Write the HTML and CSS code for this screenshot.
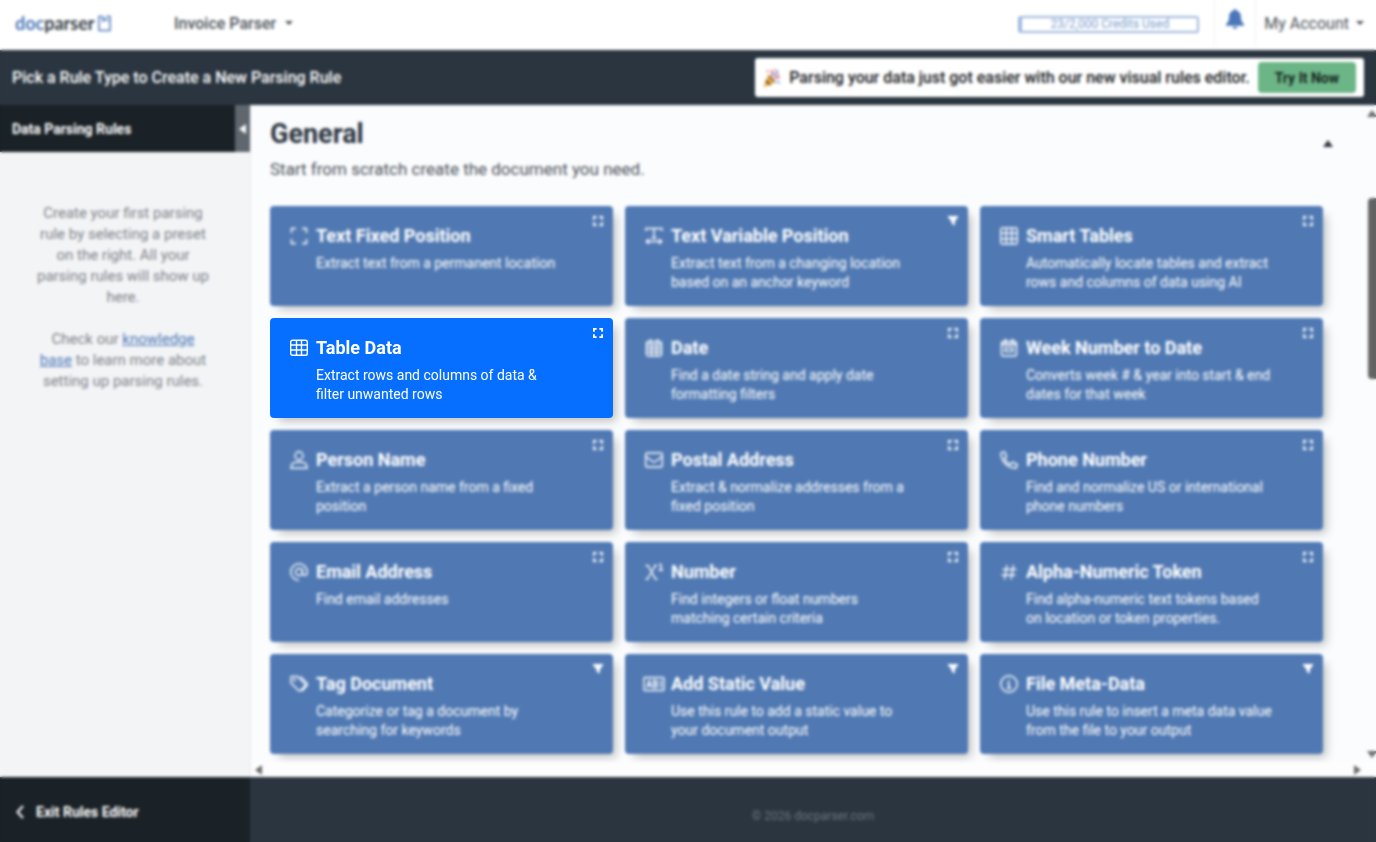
FILE: index.html
```html
<!DOCTYPE html>
<html lang="en">
<head>
    <meta charset="UTF-8">
    <meta name="viewport" content="width=device-width, initial-scale=1.0">
    <title>Docparser - Rules Editor</title>
    <link rel="stylesheet" href="styles.css">
</head>
<body>
    <!-- Icon sprite -->
    <svg class="sprite" xmlns="http://www.w3.org/2000/svg">
        <symbol id="i-frame" viewBox="0 0 18 18">
            <path d="M1.500 6V1.500H6M12 1.500h4.500V6M16.500 12v4.500H12M6 16.500H1.500V12"/>
        </symbol>
        <symbol id="i-corners" viewBox="0 0 11 11">
            <path stroke-width="2" d="M1 4V1h3M7 1h3v3M10 7v3H7M4 10H1V7"/>
        </symbol>
        <symbol id="i-funnel" viewBox="0 0 11 11">
            <path fill="currentColor" stroke="none" d="M0 0h11v1.500L7.500 6v4.500L4 8.500V6L0 1.500z"/>
        </symbol>
        <symbol id="i-anchor-text" viewBox="0 0 18 18">
            <path d="M1 4V1.500h16V4M9 1.500V11M6.500 11h5M1 14.500h16M4 12l-2.700 2.500L4 17M14 12l2.700 2.500L14 17"/>
        </symbol>
        <symbol id="i-smart-table" viewBox="0 0 18 18">
            <rect x=".8" y="1" width="16.400" height="16" rx="1.500"/>
            <path d="M1 6.300h16M1 11.700h16M6.300 1v16M11.700 1v16"/>
        </symbol>
        <symbol id="i-table" viewBox="0 0 18 18">
            <rect x=".7" y="1.200" width="16.600" height="15" rx="1.800"/>
            <path d="M1 6h16M1 11h16M6.500 1.500v14.500M11.500 1.500v14.500"/>
        </symbol>
        <symbol id="i-calendar" viewBox="0 0 18 18">
            <rect x="1.500" y="2.500" width="15" height="14.500" rx="2"/>
            <path d="M5.500 0v4M12.500 0v4M1.500 5.500h15M1.500 9.300h15M1.500 13h15M6.500 5v12M11.500 5v12"/>
        </symbol>
        <symbol id="i-week" viewBox="0 0 18 18">
            <rect x="1.500" y="2.500" width="15" height="14.500" rx="2"/>
            <path stroke-width="2" d="M5.500 0v4M12.500 0v4M2 5.500h14"/>
            <rect x="5" y="9" width="8" height="3.500"/>
        </symbol>
        <symbol id="i-person" viewBox="0 0 18 18">
            <circle cx="9" cy="4.700" r="4"/>
            <path d="M1 17.200c0-4 2.500-6 5.500-6h5c3 0 5.500 2 5.500 6z"/>
        </symbol>
        <symbol id="i-envelope" viewBox="0 0 18 18">
            <rect x=".7" y="2" width="16.600" height="14" rx="1.500"/>
            <path d="M1 5.500l6.500 5c1 .7 2 .7 3 0l6.500-5"/>
        </symbol>
        <symbol id="i-phone" viewBox="0 0 18 18">
            <path d="M1 1.800L4.600.8l2 4.700-2.200 2c1 2.500 3.200 4.800 6 6l2-2.200 4.800 2-1 3.700C7.500 17.200.8 10.500 1 1.800z"/>
        </symbol>
        <symbol id="i-at" viewBox="0 0 18 18">
            <circle cx="9" cy="9" r="3.500"/>
            <path d="M12.500 5.500V10c0 3.500 4.700 3.300 4.700-1A8.200 8.200 0 1 0 9 17.200"/>
        </symbol>
        <symbol id="i-power" viewBox="0 0 18 18">
            <path d="M.5 2.500h2.500l7.500 13.500h2M10.500 2.500l-8 13.500M.5 16h3M9 2.500h3M14 1.500h2V7M13.500 7h4.500"/>
        </symbol>
        <symbol id="i-hash" viewBox="0 0 18 18">
            <path d="M7 2L4.500 16.500M13.500 2L11 16.500M2.500 6.500h14M1.500 12h14"/>
        </symbol>
        <symbol id="i-tags" viewBox="0 0 18 18">
            <path d="M1 2v6l7.500 7.500c.6.600 1.400.600 2 0l4.500-4.500c.6-.6.600-1.400 0-2L7.500 1.500H2A1 1 0 0 0 1 2zM10.500 1.500l6.500 6.700c.7.700.7 1.600 0 2.300l-5 5.500"/>
            <circle cx="4.500" cy="5" r=".6"/>
        </symbol>
        <symbol id="i-info" viewBox="0 0 18 18">
            <circle cx="9" cy="9" r="8.200"/>
            <path d="M7 8h2v5M6.800 13.200h4.500M8.300 5h1.400"/>
        </symbol>
        <symbol id="i-static" viewBox="0 0 22 18">
            <rect x="1" y="2.500" width="20" height="13" rx="1"/>
            <path d="M4 12.500l2.200-7 2.200 7M4.800 10.500h3M10.500 5.500v7h2.200c2.300 0 2.300-3.500 0-3.500 2-.2 2-3.500 0-3.500zM10.500 9h2.200M18 5v8"/>
        </symbol>
    </svg>

    <header class="topbar">
        <a class="logo" href="#" aria-label="docparser">
            <span class="logo-doc">doc</span><span class="logo-parser">parser</span>
            <svg class="logo-mark" viewBox="0 0 13 17" fill="none" stroke="currentColor" stroke-width="1.500">
                <path d="M4 1.500H1v14h11V5"/>
                <path d="M5 1v5l2.500-2 2.500 2M8 1.500h4V6"/>
            </svg>
        </a>
        <button class="menu-button parser-menu" type="button">Invoice Parser <span class="caret"></span></button>
        <div class="account">
            <div class="credits">23/2,000 Credits Used</div>
            <button class="bell" type="button" aria-label="Notifications">
                <svg viewBox="0 0 16 18" fill="currentColor">
                    <path d="M8 0c.8 0 1.200.6 1.200 1.300C12 2 13.300 4 13.300 7c0 3.500 1 5 2.700 6.500V15H0v-1.500C1.700 12 2.700 10.500 2.700 7c0-3 1.300-5 4.100-5.700C6.800.6 7.200 0 8 0zM5.800 16h4.400c0 2.600-4.400 2.600-4.400 0z"/>
                </svg>
            </button>
            <button class="menu-button account-menu" type="button">My Account <span class="caret"></span></button>
        </div>
    </header>

    <div class="titlebar">
        <h1>Pick a Rule Type to Create a New Parsing Rule</h1>
        <div class="promo">
            <svg class="party" viewBox="0 0 16 18">
                <path fill="#e9b44c" d="M4.500 6L0 17.500 11 13z"/>
                <path fill="#8a5a2b" d="M3 10l4.500 5-2 .8L2 12.500zM4.500 6c2 .5 6 4.500 6.500 7-2-.5-6-4.500-6.500-7z"/>
                <path fill="none" stroke="#d8566b" stroke-width="1.500" d="M8 7c1-2 .5-3-.5-5M10 9c2-1 3 0 5-1"/>
                <path fill="none" stroke="#62aee0" stroke-width="1.500" d="M9.500 7.500c.5-3 3-2 4-5M12 12l3 1.500"/>
                <path fill="#e88fa0" d="M3 2h2v2H3zM12 5h2v2h-2zM10 1h2v2h-2z"/>
            </svg>
            <span>Parsing your data just got easier with our new visual rules editor.</span>
            <button type="button">Try It Now</button>
        </div>
    </div>

    <div class="workspace">
        <aside class="sidebar">
            <div class="sidebar-header">
                <h2>Data Parsing Rules</h2>
                <button class="collapse" type="button" aria-label="Collapse sidebar"><span class="arrow arrow-left"></span></button>
            </div>
            <div class="sidebar-text">
                <p>Create your first parsing rule by selecting a preset on the right. All your parsing rules will show up here.</p>
                <p>Check our <a href="#">knowledge base</a> to learn more about setting up parsing rules.</p>
            </div>
        </aside>

        <main class="rules">
            <div class="rules-content">
                <div class="section-header">
                    <div>
                        <h2>General</h2>
                        <p>Start from scratch create the document you need.</p>
                    </div>
                    <button class="section-toggle" type="button" aria-label="Collapse section"><span class="arrow arrow-up"></span></button>
                </div>
                <div class="cards">
                    <button class="card" type="button">
                        <svg class="card-icon"><use href="#i-frame"/></svg>
                        <span class="card-title">Text Fixed Position</span>
                        <span class="card-text">Extract text from a permanent location</span>
                        <svg class="card-badge"><use href="#i-corners"/></svg>
                    </button>
                    <button class="card" type="button">
                        <svg class="card-icon"><use href="#i-anchor-text"/></svg>
                        <span class="card-title">Text Variable Position</span>
                        <span class="card-text">Extract text from a changing location based on an anchor keyword</span>
                        <svg class="card-badge"><use href="#i-funnel"/></svg>
                    </button>
                    <button class="card" type="button">
                        <svg class="card-icon"><use href="#i-smart-table"/></svg>
                        <span class="card-title">Smart Tables</span>
                        <span class="card-text">Automatically locate tables and extract rows and columns of data using AI</span>
                        <svg class="card-badge"><use href="#i-corners"/></svg>
                    </button>
                    <button class="card card-active" type="button">
                        <svg class="card-icon"><use href="#i-table"/></svg>
                        <span class="card-title">Table Data</span>
                        <span class="card-text">Extract rows and columns of data &amp; filter unwanted rows</span>
                        <svg class="card-badge"><use href="#i-corners"/></svg>
                    </button>
                    <button class="card" type="button">
                        <svg class="card-icon"><use href="#i-calendar"/></svg>
                        <span class="card-title">Date</span>
                        <span class="card-text">Find a date string and apply date formatting filters</span>
                        <svg class="card-badge"><use href="#i-corners"/></svg>
                    </button>
                    <button class="card" type="button">
                        <svg class="card-icon"><use href="#i-week"/></svg>
                        <span class="card-title">Week Number to Date</span>
                        <span class="card-text">Converts week # &amp; year into start &amp; end dates for that week</span>
                        <svg class="card-badge"><use href="#i-corners"/></svg>
                    </button>
                    <button class="card" type="button">
                        <svg class="card-icon"><use href="#i-person"/></svg>
                        <span class="card-title">Person Name</span>
                        <span class="card-text">Extract a person name from a fixed position</span>
                        <svg class="card-badge"><use href="#i-corners"/></svg>
                    </button>
                    <button class="card" type="button">
                        <svg class="card-icon"><use href="#i-envelope"/></svg>
                        <span class="card-title">Postal Address</span>
                        <span class="card-text">Extract &amp; normalize addresses from a fixed position</span>
                        <svg class="card-badge"><use href="#i-corners"/></svg>
                    </button>
                    <button class="card" type="button">
                        <svg class="card-icon"><use href="#i-phone"/></svg>
                        <span class="card-title">Phone Number</span>
                        <span class="card-text">Find and normalize US or international phone numbers</span>
                        <svg class="card-badge"><use href="#i-corners"/></svg>
                    </button>
                    <button class="card" type="button">
                        <svg class="card-icon"><use href="#i-at"/></svg>
                        <span class="card-title">Email Address</span>
                        <span class="card-text">Find email addresses</span>
                        <svg class="card-badge"><use href="#i-corners"/></svg>
                    </button>
                    <button class="card" type="button">
                        <svg class="card-icon"><use href="#i-power"/></svg>
                        <span class="card-title">Number</span>
                        <span class="card-text">Find integers or float numbers matching certain criteria</span>
                        <svg class="card-badge"><use href="#i-corners"/></svg>
                    </button>
                    <button class="card" type="button">
                        <svg class="card-icon"><use href="#i-hash"/></svg>
                        <span class="card-title">Alpha-Numeric Token</span>
                        <span class="card-text">Find alpha-numeric text tokens based on location or token properties.</span>
                        <svg class="card-badge"><use href="#i-corners"/></svg>
                    </button>
                    <button class="card" type="button">
                        <svg class="card-icon"><use href="#i-tags"/></svg>
                        <span class="card-title">Tag Document</span>
                        <span class="card-text">Categorize or tag a document by searching for keywords</span>
                        <svg class="card-badge"><use href="#i-funnel"/></svg>
                    </button>
                    <button class="card" type="button">
                        <svg class="card-icon card-icon-wide"><use href="#i-static"/></svg>
                        <span class="card-title">Add Static Value</span>
                        <span class="card-text">Use this rule to add a static value to your document output</span>
                        <svg class="card-badge"><use href="#i-funnel"/></svg>
                    </button>
                    <button class="card" type="button">
                        <svg class="card-icon"><use href="#i-info"/></svg>
                        <span class="card-title">File Meta-Data</span>
                        <span class="card-text">Use this rule to insert a meta data value from the file to your output</span>
                        <svg class="card-badge"><use href="#i-funnel"/></svg>
                    </button>
                </div>
            </div>
            <div class="scroll-y">
                <span class="arrow arrow-up"></span>
                <span class="scroll-thumb"></span>
                <span class="arrow arrow-down"></span>
            </div>
            <div class="scroll-x">
                <span class="arrow arrow-left"></span>
                <span class="arrow arrow-right"></span>
            </div>
        </main>
    </div>

    <footer class="footer">
        <a class="exit" href="#">
            <svg viewBox="0 0 8 14" fill="none" stroke="currentColor" stroke-width="2"><path d="M7 1L1.500 7 7 13"/></svg>
            Exit Rules Editor
        </a>
        <p>© 2026 docparser.com</p>
    </footer>

    <!-- Softens everything except the active card -->
    <div class="focus-overlay"></div>
</body>
</html>
```

FILE: styles.css
```css
* {
    box-sizing: border-box;
}
body {
    margin: 0;
    height: 100vh;
    display: flex;
    flex-direction: column;
    overflow: hidden;
    font-family: Roboto, Arial, sans-serif;
    color: #2b3440;
    background-color: #fbfcfe;
}
h1, h2, p {
    margin: 0;
}
button {
    font-family: inherit;
    border: none;
    cursor: pointer;
}
.sprite {
    display: none;
}
.focus-overlay {
    position: fixed;
    inset: 0;
    z-index: 5;
    pointer-events: none;
    backdrop-filter: blur(1.4px);
}

/* Top bar */
.topbar {
    display: flex;
    align-items: center;
    height: 50px;
    flex-shrink: 0;
    padding: 0 12px 4px 15px;
    background-color: #fff;
}
.logo {
    display: flex;
    align-items: center;
    width: 159px;
    font-family: Lato, sans-serif;
    font-size: 18px;
    font-weight: bold;
    line-height: 24px;
    text-decoration: none;
}
.logo-doc {
    color: #4f7ab8;
}
.logo-parser {
    color: #343b44;
}
.logo-mark {
    width: 13px;
    height: 17px;
    margin-left: 3px;
    color: #4f7ab8;
}
.menu-button {
    display: flex;
    align-items: center;
    gap: 9px;
    padding: 0;
    background: none;
    color: #4b5159;
    font-size: 16px;
}
.parser-menu {
    font-weight: 500;
}
.caret {
    border: 4px solid transparent;
    border-top-color: currentColor;
    border-bottom: none;
}
.account {
    display: flex;
    align-items: center;
    margin-left: auto;
}
.credits {
    width: 181px;
    height: 17px;
    margin-top: 2px;
    margin-right: 15px;
    border: 2px solid #9fb8dc;
    border-left-width: 4px;
    border-radius: 3px;
    color: #7c9ccd;
    font-size: 12px;
    line-height: 13px;
    text-align: center;
}
.bell {
    width: 42px;
    height: 46px;
    padding: 0 0 9px;
    background: none;
    border: solid #f0f1f3;
    border-width: 0 1px;
    color: #4a76b8;
}
.bell svg {
    display: block;
    width: 18px;
    height: 20px;
    margin: 0 auto;
}
.account-menu {
    gap: 7px;
    padding-left: 8px;
}

/* Title bar */
.titlebar {
    display: flex;
    align-items: center;
    justify-content: space-between;
    height: 55px;
    flex-shrink: 0;
    padding: 0 12px;
    background-color: #2a3540;
}
.titlebar h1 {
    color: #fff;
    font-size: 16px;
    font-weight: 500;
}
.promo {
    display: flex;
    align-items: center;
    gap: 8px;
    padding: 4px 8px;
    border-radius: 3px;
    background-color: #fff;
    color: #16191c;
    font-size: 16px;
    font-weight: 500;
}
.party {
    width: 18px;
    height: 20px;
}
.promo button {
    height: 31px;
    padding: 0 17px;
    border-radius: 4px;
    background-color: #6bb587;
    color: #16231b;
    font-size: 14px;
    font-weight: bold;
}

/* Sidebar */
.workspace {
    display: flex;
    flex: 1;
    min-height: 0;
}
.sidebar {
    width: 251px;
    flex-shrink: 0;
    border-right: 1px solid #e9ebee;
    background-color: #f3f4f6;
}
.sidebar-header {
    display: flex;
    align-items: center;
    justify-content: space-between;
    height: 47px;
    padding-left: 12px;
    background-color: #1a2127;
}
.sidebar-header h2 {
    color: #fff;
    font-size: 14px;
    font-weight: bold;
}
.collapse {
    display: flex;
    align-items: center;
    justify-content: center;
    width: 15px;
    height: 47px;
    padding: 0;
    background-color: #5f666e;
    color: #fff;
}
.sidebar-text {
    padding: 51px 39px 0 35px;
    color: #7d8389;
    font-size: 15px;
    line-height: 21px;
    text-align: center;
}
.sidebar-text p {
    margin-bottom: 21px;
}
.sidebar-text a {
    color: #4f7ab8;
}

/* Rule picker */
.rules {
    display: grid;
    flex: 1;
    min-width: 0;
    grid-template-columns: 1fr 8px;
    grid-template-rows: 1fr 15px;
}
.rules-content {
    min-height: 0;
    overflow: hidden;
    padding: 12px 45px 0 19px;
}
.section-header {
    display: flex;
    align-items: center;
    justify-content: space-between;
    margin-bottom: 26px;
}
.section-header h2 {
    font-size: 27px;
    line-height: 34px;
}
.section-header p {
    margin-top: 8px;
    color: #4b5159;
    font-size: 17px;
    line-height: 21px;
}
.section-toggle {
    padding: 5px 10px 12px;
    align-self: flex-start;
    margin-top: 18px;
    margin-right: -20px;
    background: none;
    color: #2b3440;
}
.cards {
    display: grid;
    grid-template-columns: repeat(3, 1fr);
    gap: 12px;
}
.card {
    position: relative;
    display: grid;
    grid-template-columns: 18px 1fr;
    column-gap: 8px;
    align-content: start;
    min-height: 100px;
    padding: 19px 50px 11px 20px;
    border-radius: 4px;
    background-color: #5079b3;
    box-shadow: 6px 6px 10px -3px rgba(0, 0, 0, 0.25);
    color: #fff;
    text-align: left;
}
.card-active {
    z-index: 10;
    background-color: #066fff;
}
.card-icon {
    width: 18px;
    height: 18px;
    align-self: center;
    fill: none;
    stroke: currentColor;
    stroke-width: 1.4;
}
.card-icon-wide {
    width: 22px;
    margin-left: -2px;
}
.card-title {
    font-size: 18px;
    font-weight: bold;
    line-height: 22px;
}
.card-text {
    grid-column: 2;
    margin-top: 7px;
    font-size: 14px;
    line-height: 19px;
}
.card-badge {
    position: absolute;
    top: 10px;
    right: 10px;
    width: 10px;
    height: 10px;
    fill: none;
    stroke: currentColor;
}

/* Scrollbars */
.scroll-y {
    display: flex;
    flex-direction: column;
    align-items: center;
    padding: 5px 0 4px;
    color: #6a6a6a;
}
.scroll-thumb {
    width: 8px;
    height: 28%;
    margin: 81px 0 auto;
    border-radius: 4px 0 0 4px;
    background-color: #636363;
}
.scroll-x {
    grid-column: 1 / -1;
    display: flex;
    align-items: center;
    justify-content: space-between;
    padding: 0 15px 0 4px;
    background-color: #fdfdfd;
    color: #6a6a6a;
}
.arrow {
    display: block;
    width: 0;
    height: 0;
    border: 5px solid transparent;
}
.arrow-up {
    border-bottom: 7px solid currentColor;
    border-top: none;
}
.arrow-down {
    border-top: 7px solid currentColor;
    border-bottom: none;
}
.arrow-left {
    border-right: 7px solid currentColor;
    border-left: none;
}
.arrow-right {
    border-left: 7px solid currentColor;
    border-right: none;
}

/* Footer */
.footer {
    display: flex;
    align-items: center;
    height: 65px;
    flex-shrink: 0;
    background-color: #2a3540;
}
.exit {
    display: flex;
    align-items: center;
    gap: 12px;
    width: 250px;
    height: 100%;
    padding: 4px 16px 0;
    background-color: #1a2127;
    color: #fff;
    font-size: 14px;
    font-weight: bold;
    text-decoration: none;
}
.exit svg {
    width: 8px;
    height: 14px;
}
.footer p {
    flex: 1;
    padding-top: 12px;
    color: #6b727a;
    font-size: 12px;
    text-align: center;
}
```
